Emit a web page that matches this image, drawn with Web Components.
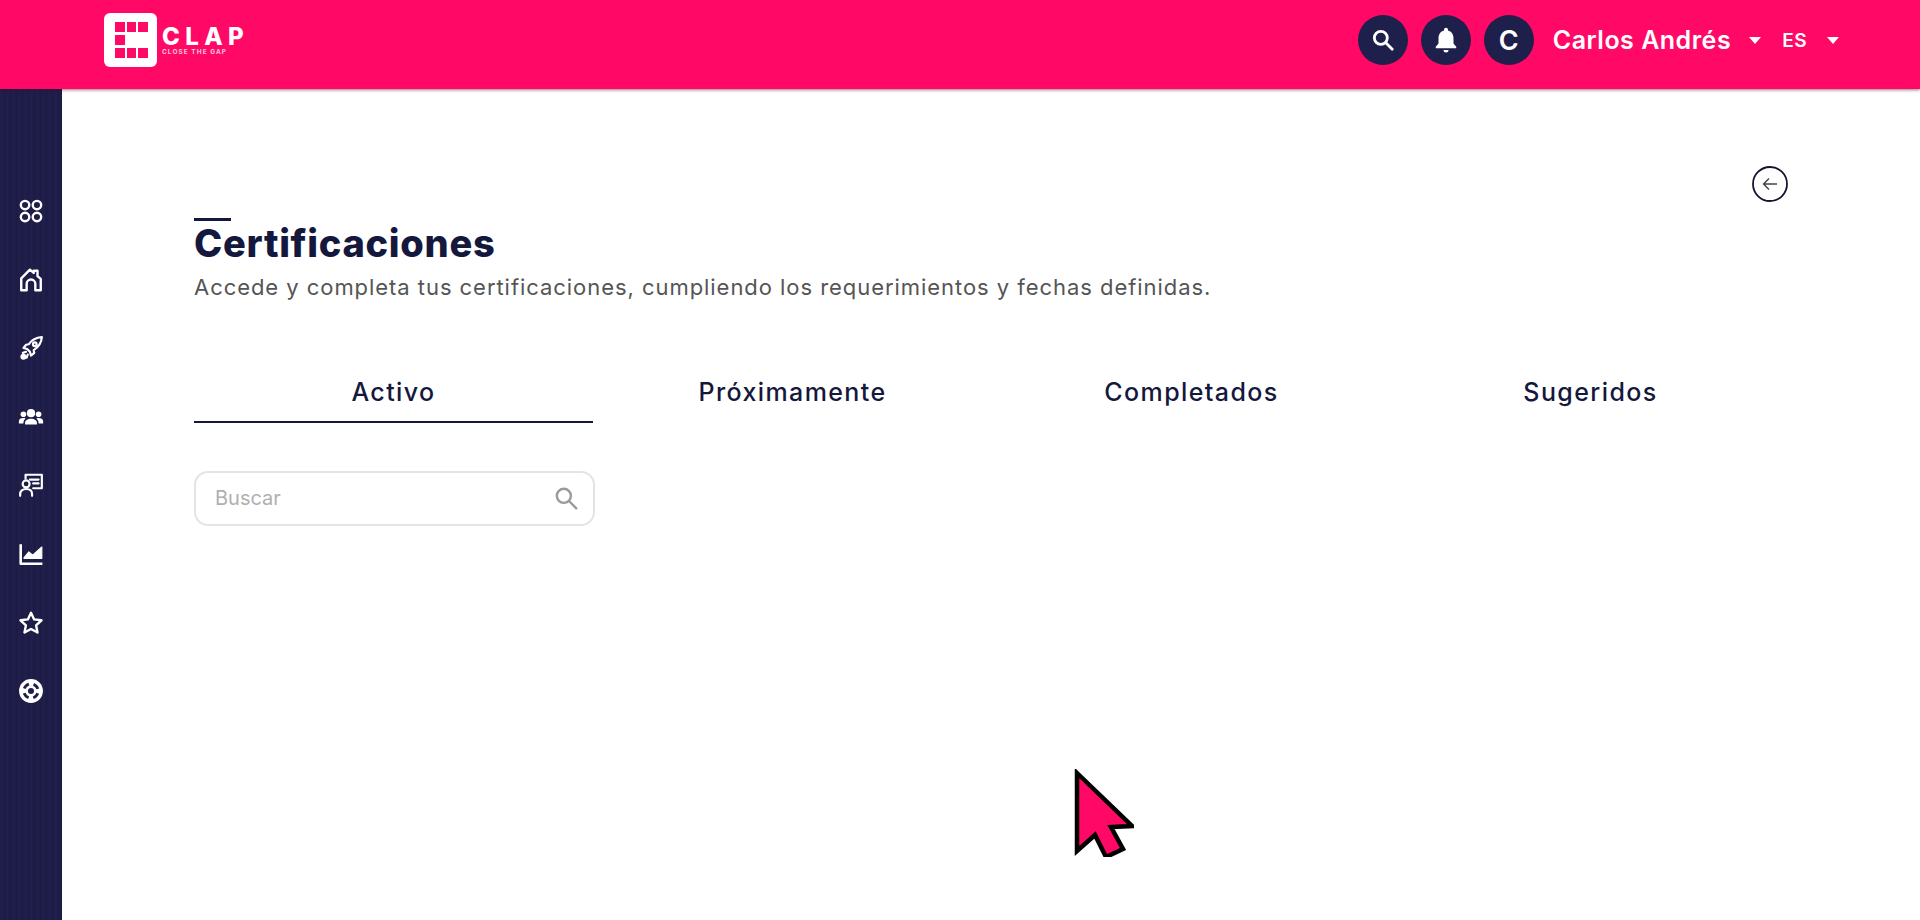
<!DOCTYPE html>
<html lang="es"><head><meta charset="utf-8"><title>Certificaciones</title>
<style>
html,body{margin:0;height:100%;background:#fff;overflow:hidden;font-family:Inter,"Open Sans",sans-serif}
</style></head><body>
<clap-app></clap-app>
<script>
const I={
search:'<svg viewBox="0 0 24 24" width="26" height="26" fill="none" stroke="#fff" stroke-width="2.6" stroke-linecap="round"><circle cx="10" cy="10" r="6"/><path d="M14.6 14.6 20.5 20.5"/></svg>',
bell:'<svg viewBox="0 0 24 24" width="30" height="30" fill="#fff"><path d="M12 2.2a1.6 1.6 0 0 0-1.6 1.6v.5C7.6 5 6 7.5 6 10.500v4.300L3.800 17.300V18.500h16.400v-1.200L18 14.800v-4.300c0-3-1.600-5.500-4.400-6.200v-.5A1.600 1.600 0 0 0 12 2.200z"/><path d="M10 20h4a2 2 0 0 1-4 0z"/></svg>',
grid:'<svg viewBox="0 0 24 24" width="26" height="26" fill="none" stroke="#fff" stroke-width="2.200"><circle cx="6.500" cy="6.500" r="3.900"/><circle cx="17.500" cy="6.500" r="3.900"/><circle cx="6.500" cy="17.500" r="3.900"/><circle cx="17.500" cy="17.500" r="3.900"/></svg>',
home:'<svg viewBox="0 0 24 24" width="26" height="26" fill="none" stroke="#fff" stroke-width="2.200" stroke-linejoin="round" stroke-linecap="round"><path d="M3 21.500V10.500L11 2.500l3.500 3V3.500H18V8.500l3 2.500v10.500h-5v-6a4 4 0 0 0-8 0v6z"/></svg>',
rocket:'<svg viewBox="0 0 24 24" width="26" height="26" fill="none" stroke="#fff" stroke-width="2" stroke-linejoin="round" stroke-linecap="round"><path d="M22 2c-5 .3-9 2-12 6.500L7.500 9 5 12l3.500 1 2.500 2.500 1 3.500 3-2.500-.5-2.500C19 11 21.700 7 22 2z"/><circle cx="15.500" cy="8.500" r="1.700"/><circle cx="5" cy="20" r="1.800" fill="#fff"/><path d="M7.500 15.500 4.500 16.500M9 18l-1 3"/></svg>',
users:'<svg viewBox="0 0 24 24" width="26" height="26" fill="#fff"><circle cx="12" cy="8.500" r="3.800"/><circle cx="5" cy="9.500" r="2.600"/><circle cx="19" cy="9.500" r="2.600"/><path d="M6.500 19v-1.500c0-2.500 2.200-4 5.500-4s5.500 1.500 5.500 4V19z"/><path d="M5 18H.800v-1.800C.800 14 2.500 13 5 13c.8 0 1.400.1 2 .3-1.300 1-2 2.400-2 4.200zM19 18h4.200v-1.800C23.200 14 21.500 13 19 13c-.8 0-1.400.1-2 .3 1.300 1 2 2.400 2 4.200z"/></svg>',
board:'<svg viewBox="0 0 24 24" width="26" height="26" fill="none" stroke="#fff" stroke-width="2" stroke-linecap="round" stroke-linejoin="round"><path d="M7 6V2.500h15V15h-8"/><path d="M11 7h8M14 10.500h5"/><circle cx="7.500" cy="11" r="3.200"/><path d="M2 22v-1.500c0-3 2.200-4.800 5.500-4.800s5.500 1.800 5.500 4.800V22"/></svg>',
chart:'<svg viewBox="0 0 24 24" width="26" height="26" fill="none" stroke="#fff" stroke-width="2.400" stroke-linejoin="round"><path d="M2.500 3v18h20"/><path d="M5.500 15.500 10 10l3.500 3L22 5.500V16H5.500z" fill="#fff" stroke-width="1"/></svg>',
star:'<svg viewBox="0 0 24 24" width="26" height="26" fill="none" stroke="#fff" stroke-width="2.200" stroke-linejoin="round"><path d="m12 2.500 2.900 6.200 6.800.8-5 4.600 1.300 6.700L12 17.500l-6 3.300 1.300-6.700-5-4.600 6.800-.8z"/></svg>',
help:'<svg viewBox="0 0 24 24" width="26" height="26"><circle cx="12" cy="12" r="11" fill="#fff"/><circle cx="12" cy="12" r="2.800" fill="#1f1f4b"/><circle cx="12" cy="12" r="6.600" fill="none" stroke="#1f1f4b" stroke-width="2.600" stroke-dasharray="6 4.367" stroke-dashoffset="-2.180"/></svg>'
};
const def=(n,html)=>customElements.define(n,class extends HTMLElement{constructor(){super();this.attachShadow({mode:'open'}).innerHTML=typeof html==='function'?html(this):html;}});

def('clap-logo',`<style>:host{display:flex;align-items:center;gap:5px;color:#fff}
.m{width:53px;height:54px;background:#fff;border-radius:6px;display:grid;grid-template-columns:repeat(3,9.500px);grid-template-rows:repeat(3,10px);column-gap:2px;row-gap:3px;padding:9px 0 0 11px;box-sizing:border-box}
.m i{background:#ff0866}.m i.o{background:none}
.t{display:flex;flex-direction:column;padding-top:3px}
.b{font:800 24px/22px Inter,sans-serif;letter-spacing:5.400px}.s{font:700 6.500px/9px Inter,sans-serif;letter-spacing:1.050px;color:#ffc4da;white-space:nowrap}
</style><div class="m"><i></i><i></i><i></i><i></i><i class="o"></i><i class="o"></i><i></i><i></i><i></i></div><div class="t"><div class="b">CLAP</div><div class="s">CLOSE THE GAP</div></div>`);

def('round-btn',`<style>:host{width:50px;height:50px;border-radius:50%;background:#1f1f4b;display:flex;align-items:center;justify-content:center;color:#fff;font:600 27px Inter,sans-serif}</style><slot></slot>`);

def('drop-label',`<style>:host{display:inline-flex;align-items:center;color:#fff;font:600 var(--fs,24px) Inter,sans-serif;white-space:nowrap;letter-spacing:var(--ls,0)}
i{display:block;width:0;height:0;border:6.500px solid transparent;border-top:7px solid #fff;border-bottom:0;margin-left:var(--gap,18px)}</style><slot></slot><i></i>`);

def('top-bar',()=>`<style>:host{display:flex;align-items:center;height:89px;background:#ff0866;padding:0 81px 9px 104px;box-sizing:border-box;box-shadow:0 1px 3px rgba(70,0,40,.55);position:relative;z-index:1;flex:none}
.sp{flex:1}.btns{display:flex;gap:13px}
.u{margin-left:19px;--fs:25px;--ls:.500px;--gap:18px}.l{margin-left:21px;--fs:19px;--ls:.500px;--gap:20px}</style>
<clap-logo></clap-logo><div class="sp"></div>
<div class="btns"><round-btn>${I.search}</round-btn><round-btn>${I.bell}</round-btn><round-btn>C</round-btn></div>
<drop-label class="u">Carlos Andrés</drop-label><drop-label class="l">ES</drop-label>`);

def('side-nav',()=>`<style>:host{display:flex;flex-direction:column;align-items:center;width:62px;flex:none;background:repeating-linear-gradient(90deg,#201e4a 0 3px,#1d1c46 3px 6px);border-right:1px solid #17154f;padding-top:109px;gap:42.600px;box-sizing:border-box}
svg{display:block}</style>${['grid','home','rocket','users','board','chart','star','help'].map(k=>I[k]).join('')}`);

def('page-title',`<style>:host{display:block}
.bar{width:37px;height:3px;background:#14183d}
h1{margin:0;font:800 38px/44px Inter,sans-serif;color:#14183d;letter-spacing:.700px}
p{margin:8px 0 0;font:400 22px/28px Inter,sans-serif;color:#555;white-space:nowrap;letter-spacing:.950px}</style>
<div class="bar"></div><h1><slot name="t"></slot></h1><p><slot name="s"></slot></p>`);

def('tab-bar',`<style>:host{display:grid;grid-template-columns:repeat(4,399px);margin-top:59px;font:500 25px/30px Inter,sans-serif;color:#14183d}</style><slot></slot>`);
def('tab-item',`<style>:host{display:block;text-align:center;height:63px;padding-top:17px;box-sizing:border-box;letter-spacing:1.400px}
:host([active]){border-bottom:2px solid #14183d}</style><slot></slot>`);

def('search-box',`<style>:host{display:flex;align-items:center;justify-content:space-between;width:401px;height:55px;box-sizing:border-box;margin-top:48px;border:2.500px solid #e4e4e4;border-radius:14px;background:#fff;padding:0 14px 2px 19px;font:400 20px Inter,sans-serif;color:#b0b0b0}
svg{display:block}</style><span>Buscar</span><svg viewBox="0 0 24 24" width="26" height="26" fill="none" stroke="#9a9a9a" stroke-width="2.200" stroke-linecap="round"><circle cx="10" cy="10" r="6.500"/><path d="M15 15 21.500 21.500"/></svg>`);

def('back-btn',`<style>:host{display:block;align-self:flex-end;width:36px;height:36px}svg{display:block}</style>
<svg viewBox="0 0 36 36" width="36" height="36" fill="none" stroke="#15152f"><circle cx="18" cy="18" r="17" stroke-width="1.800"/><path d="M25 18H11.500M17 12.500 11.500 18l5.500 5.500" stroke-width="1.400" stroke="#444"/></svg>`);

def('arrow-cursor',`<style>:host{position:absolute;left:1074px;top:769px;width:60px;height:88px;z-index:2}svg{display:block}</style>
<svg viewBox="0 0 60 88" width="60" height="88"><path d="M3 4 58 57 37 58 49 80 32 88 21 66 3 82z" fill="#ff0866" stroke="#000" stroke-width="4.500" stroke-linejoin="miter"/></svg>`);

def('cert-page',`<style>:host{display:flex;flex-direction:column;flex:1;min-width:0;padding:77px 132px 0 132px;background:#fff;box-sizing:border-box}
page-title{margin-top:16px}</style>
<back-btn></back-btn>
<page-title><slot name="t" slot="t"></slot><slot name="s" slot="s"></slot></page-title>
<tab-bar><tab-item active>Activo</tab-item><tab-item>Próximamente</tab-item><tab-item>Completados</tab-item><tab-item>Sugeridos</tab-item></tab-bar>
<search-box></search-box>`);

def('clap-app',`<style>:host{display:flex;flex-direction:column;width:1920px;height:920px;position:relative;overflow:hidden}
.b{display:flex;flex:1;min-height:0}</style>
<top-bar></top-bar><div class="b"><side-nav></side-nav><cert-page><span slot="t">Certificaciones</span><span slot="s">Accede y completa tus certificaciones, cumpliendo los requerimientos y fechas definidas.</span></cert-page></div><arrow-cursor></arrow-cursor>`);
</script>
</body></html>
